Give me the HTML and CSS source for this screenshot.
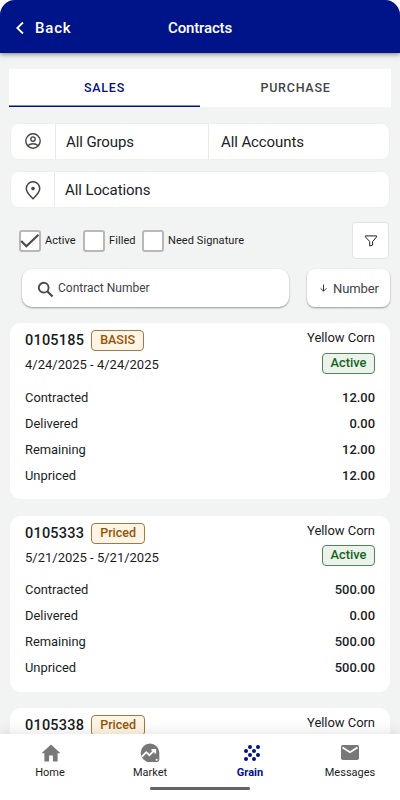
FILE: index.html
```html
<!DOCTYPE html>
<html lang="en">
<head>
<meta charset="utf-8">
<title>Contracts</title>
<link rel="stylesheet" href="styles.css">
</head>
<body>
<div class="app">
  <header class="header">
    <div class="back">
      <svg width="8" height="14" viewBox="0 0 8 14"><path d="M7 1.5 1.3 7 7 12.5" fill="none" stroke="#fff" stroke-width="1.8"/></svg>
      <span>Back</span>
    </div>
    <h1 class="title">Contracts</h1>
    <div></div>
  </header>
  <main class="content">
    <nav class="tabs">
      <div class="tab tab-on"><span>SALES</span></div>
      <div class="tab"><span>PURCHASE</span></div>
    </nav>
    <div class="select select-groups">
      <div class="select-icon">
        <svg width="18" height="18" viewBox="0 0 18 18" fill="none" stroke="#414941" stroke-width="1.4"><circle cx="9" cy="9" r="7.2"/><circle cx="9" cy="7.1" r="2.2"/><path d="M3.8 13.8C5.1 12.5 7 11.7 9 11.7s3.9.8 5.2 2.1"/></svg>
      </div>
      <div class="select-field groups"><span>All Groups</span></div>
      <div class="select-field accounts"><span>All Accounts</span></div>
    </div>
    <div class="select select-locations">
      <div class="select-icon">
        <svg width="18" height="20" viewBox="0 0 18 20"><path d="M9 1.7a6.7 6.7 0 0 0-6.7 6.7C2.3 12.7 6.2 15.5 9 18.7c2.8-3.2 6.7-6 6.7-10.3A6.7 6.7 0 0 0 9 1.7Z" fill="none" stroke="#414941" stroke-width="1.5"/><circle cx="9" cy="8.6" r="1.8" fill="#414941"/></svg>
      </div>
      <div class="select-field locations"><span>All Locations</span></div>
    </div>
    <div class="filters">
      <div class="check check-active"><i class="box"><svg width="20" height="16" viewBox="0 0 20 16"><path d="m1.2 8 5.200 5.200L18.400 1.700" fill="none" stroke="#4b4b4b" stroke-width="2.200"/></svg></i><span>Active</span></div>
      <div class="check check-filled"><i class="box"></i><span>Filled</span></div>
      <div class="check check-sign"><i class="box"></i><span>Need Signature</span></div>
      <div class="filter-button"><svg width="14" height="12" viewBox="0 0 14 12"><path d="M1.4.9h11.200v1L8.600 6.500v3.600L5.700 11V6.500L1.400 1.900Z" fill="none" stroke="#222" stroke-width="1"/></svg></div>
    </div>
    <div class="search-row">
      <div class="search">
        <svg width="17" height="17" viewBox="0 0 17 17" fill="none" stroke="#4b4b4b"><circle cx="6.7" cy="6.7" r="4.9" stroke-width="1.9"/><path d="m10.500 10.500 5 5" stroke-width="2.300"/></svg>
        <span>Contract Number</span>
      </div>
      <div class="sort">
        <svg width="7" height="8" viewBox="0 0 7 8"><path d="M3.500.5v6.600M.6 4.300l2.900 2.900 2.900-2.900" fill="none" stroke="#35353f" stroke-width="1"/></svg>
        <span>Number</span>
      </div>
    </div>
    <section class="cards">
      <article class="card">
        <div class="card-head">
          <div class="card-id"><div class="id-row"><b>0105185</b><em class="tag kind">BASIS</em></div><div class="dates">4/24/2025 - 4/24/2025</div></div>
          <div class="card-state"><div class="crop">Yellow Corn</div><em class="tag state">Active</em></div>
        </div>
        <dl class="amounts">
          <div><dt>Contracted</dt><dd>12.00</dd></div>
          <div><dt>Delivered</dt><dd>0.00</dd></div>
          <div><dt>Remaining</dt><dd>12.00</dd></div>
          <div><dt>Unpriced</dt><dd>12.00</dd></div>
        </dl>
      </article>
      <article class="card">
        <div class="card-head">
          <div class="card-id"><div class="id-row"><b>0105333</b><em class="tag kind priced">Priced</em></div><div class="dates">5/21/2025 - 5/21/2025</div></div>
          <div class="card-state"><div class="crop">Yellow Corn</div><em class="tag state">Active</em></div>
        </div>
        <dl class="amounts">
          <div><dt>Contracted</dt><dd>500.00</dd></div>
          <div><dt>Delivered</dt><dd>0.00</dd></div>
          <div><dt>Remaining</dt><dd>500.00</dd></div>
          <div><dt>Unpriced</dt><dd>500.00</dd></div>
        </dl>
      </article>
      <article class="card">
        <div class="card-head">
          <div class="card-id"><div class="id-row"><b>0105338</b><em class="tag kind priced">Priced</em></div></div>
          <div class="card-state"><div class="crop">Yellow Corn</div></div>
        </div>
      </article>
    </section>
  </main>
  <footer class="bottom">
    <div class="nav">
      <div class="nav-item">
        <svg width="20" height="20" viewBox="0 0 20 20"><path d="M10 1.500.500 10.200h2.900V18.500h4.700v-6h3.800v6h4.700v-8.300h2.900Z" fill="#787878"/></svg>
        <span>Home</span>
      </div>
      <div class="nav-item">
        <svg width="20" height="20" viewBox="0 0 20 20"><path d="M10 .5a9.300 9.300 0 1 0 0 18.600h7a2.300 2.300 0 0 0 2.300-2.300V9.800A9.300 9.300 0 0 0 10 .5Z" fill="#787878"/><path d="m2 13.500 4.300-4.300 3 3 5.400-5.200M11.500 6.800h3.700v3.700" fill="none" stroke="#fff" stroke-width="1.800"/><circle cx="16.700" cy="16.700" r="1" fill="#fff"/></svg>
        <span>Market</span>
      </div>
      <div class="nav-item nav-on">
        <svg width="20" height="20" viewBox="0 0 20 20" fill="#02108a"><circle cx="8" cy="4" r="2"/><circle cx="16" cy="4" r="2"/><circle cx="4" cy="8" r="2"/><circle cx="12" cy="8" r="2"/><circle cx="8" cy="12" r="2"/><circle cx="16" cy="12" r="2"/><circle cx="4" cy="16" r="2"/><circle cx="12" cy="16" r="2"/></svg>
        <span>Grain</span>
      </div>
      <div class="nav-item">
        <svg width="20" height="20" viewBox="0 0 20 20"><rect x="1" y="2" width="18" height="15" rx="1.800" fill="#787878"/><path d="m2.500 4.500 7.500 4.800 7.500-4.800" fill="none" stroke="#fff" stroke-width="1.700"/></svg>
        <span>Messages</span>
      </div>
    </div>
    <div class="handle"></div>
  </footer>
</div>
</body>
</html>
```
FILE: styles.css
```css
* { box-sizing: border-box; }
body { margin: 0; background: #fff; font-family: Roboto, sans-serif; color: #1a1c1e; }
svg { display: block; flex: none; }
.app { width: 400px; height: 800px; overflow: hidden; display: flex; flex-direction: column; background: #f2f4f3; border-radius: 15px 15px 0 0; }
.header { flex: none; height: 53px; background: #001489; color: #fff; display: grid; grid-template-columns: 1fr auto 1fr; align-items: center; padding: 2px 16px 0; box-shadow: 0 1px 5px rgba(0,0,0,.5); z-index: 1; }
.back { display: flex; align-items: center; gap: 11px; font-size: 15px; font-weight: 500; letter-spacing: .8px; }
.title { margin: 0; font-size: 15px; font-weight: 500; letter-spacing: -.15px; }
.content { flex: 1; min-height: 0; overflow: hidden; padding: 16px 10px 0; display: flex; flex-direction: column; }
.tabs { flex: none; height: 38px; display: flex; margin: 0 -1px; background: #fff; font-size: 12.5px; font-weight: 500; letter-spacing: .75px; }
.tab { flex: 1; display: flex; align-items: center; justify-content: center; color: #444; border-bottom: 1px solid transparent; }
.tab-on { color: #02108a; border-bottom: 1px solid #02108a; box-shadow: inset 0 -.5px #02108a; }
.select { flex: none; display: flex; background: #fff; border: 1px solid #eff1e9; border-radius: 9px; font-size: 15px; letter-spacing: -.1px; color: #222; }
.select-groups { margin-top: 16px; height: 37px; }
.select-locations { margin-top: 11px; height: 37px; }
.select-icon { width: 44px; display: flex; align-items: center; justify-content: center; padding-bottom: 1px; }
.select-locations .select-icon { width: 43px; padding: 1px 0 0 1px; }
.select-field { display: flex; align-items: center; border-left: 1px solid #e9ece5; }
.groups { width: 153px; padding-left: 10px; }
.accounts { flex: 1; padding-left: 12px; }
.locations { flex: 1; padding-left: 10px; }
.filters { flex: none; display: flex; align-items: center; margin-top: 14px; height: 37px; padding-left: 9px; }
.check { display: flex; align-items: center; gap: 4px; font-size: 11px; letter-spacing: .08px; }
.check-active { width: 64px; }
.check-filled { width: 59px; }
.box { width: 22px; height: 22px; flex: none; border: 2px solid #b7b8b7; border-radius: 3px; background: #fff; display: flex; align-items: center; justify-content: center; }
.check span { white-space: nowrap; }
.filter-button { margin-left: auto; width: 37px; height: 37px; border: 1px solid #e2e4e4; border-radius: 4px; background: #fff; display: flex; align-items: center; justify-content: center; margin-right: 1px; }
.search-row { flex: none; display: flex; justify-content: space-between; margin-top: 10px; height: 38px; padding-left: 12px; }
.search, .sort { background: #fff; box-shadow: 0 1px 2px rgba(0,0,0,.38); display: flex; align-items: center; color: #42424a; }
.search { width: 267px; border-radius: 10px; padding-left: 15px; gap: 4px; font-size: 12px; letter-spacing: 0; }
.search svg { margin-top: 2px; }
.sort { width: 83px; border-radius: 8px; padding-left: 13px; gap: 6px; font-size: 13px; letter-spacing: -.1px; }
.cards { margin-top: 16px; display: flex; flex-direction: column; gap: 16.6px; }
.card { flex: none; height: 176px; background: #fff; border-radius: 11px; padding: 7px 15px 0; }
.card-head { display: flex; justify-content: space-between; height: 54px; }
.id-row { display: flex; align-items: center; gap: 7px; height: 21px; }
.id-row b { font-size: 14.5px; font-weight: 500; letter-spacing: .2px; }
.tag { font-style: normal; font-weight: 500; font-size: 12.5px; line-height: 18px; display: flex; align-items: flex-start; justify-content: center; height: 21px; border: 1px solid; border-radius: 4px; }
.kind { width: 53px; color: #955403; border-color: #a4783f; background: #fef5e6; }
.priced { width: 54px; }
.dates { margin-top: 6.4px; font-size: 13px; line-height: 16px; }
.card-state { display: flex; flex-direction: column; align-items: flex-end; }
.crop { font-size: 13px; line-height: 16px; letter-spacing: -.05px; }
.state { margin-top: 6.5px; width: 53px; font-size: 12.8px; color: #14641a; border-color: #4f8750; background: #edf2ec; }
.amounts { margin: 0; font-size: 12.9px; }
.amounts div { display: flex; align-items: center; justify-content: space-between; height: 26px; }
.amounts dd { margin: 0; font-weight: 500; }
.bottom { flex: none; height: 66px; background: #fff; box-shadow: 0 -2px 12px rgba(0,0,0,.1); z-index: 1; }
.nav { display: flex; height: 53px; padding-top: 9px; }
.nav-item { flex: 1; display: flex; flex-direction: column; align-items: center; gap: 2px; font-size: 11px; line-height: 16px; }
.nav-item svg { margin-left: 1px; margin-right: 1px; }
.nav-item:first-child svg { margin-left: 3px; }
.nav-on svg { margin-left: 4px; }
.nav-on { color: #02108a; font-weight: 700; }
.handle { width: 100px; height: 3px; border-radius: 2px; background: #636363; margin: 0 auto; }
```
